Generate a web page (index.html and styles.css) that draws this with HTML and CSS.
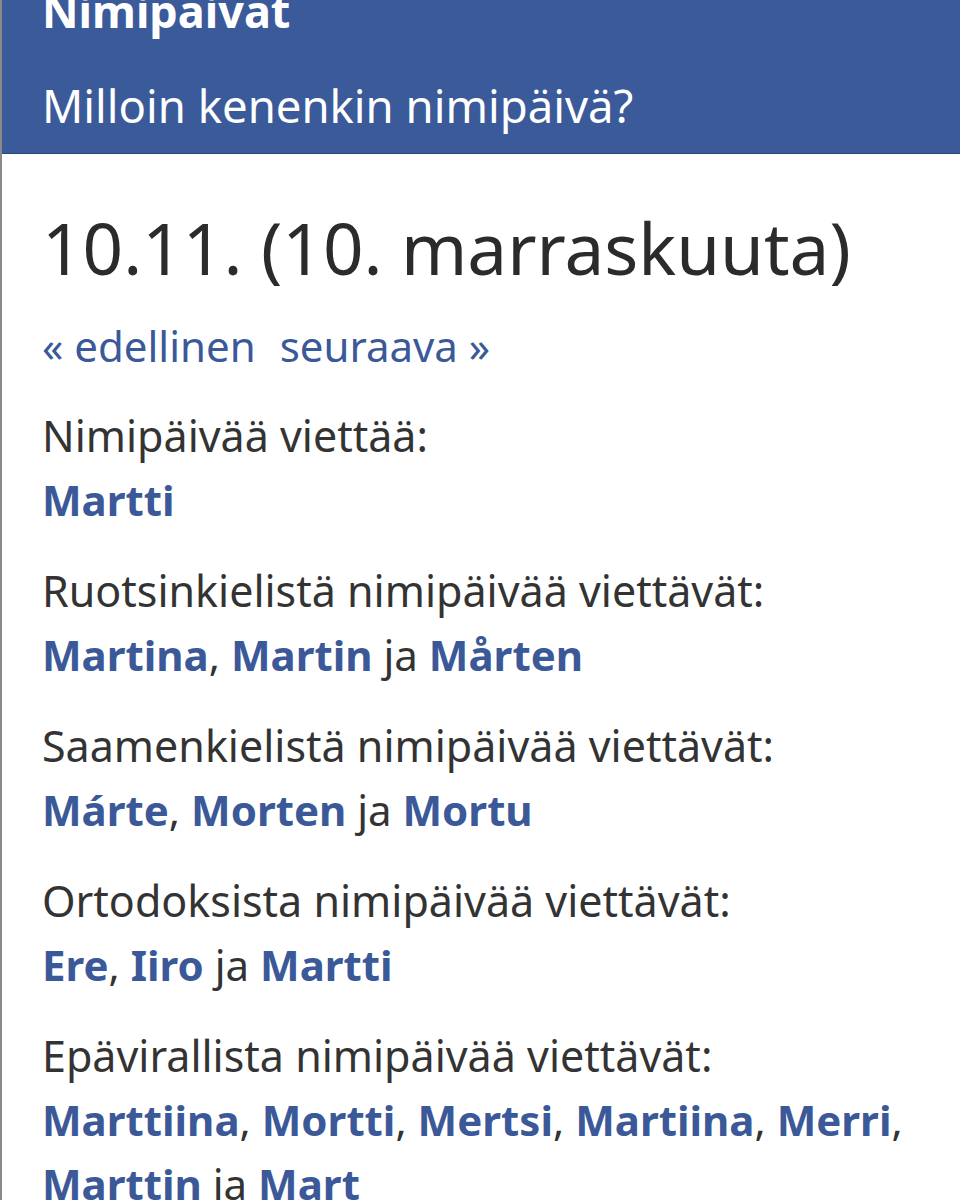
FILE: index.html
```html
<!DOCTYPE html>
<html lang="fi">
<head>
    <meta charset="utf-8">
    <meta name="viewport" content="width=device-width,initial-scale=1.0">
    <title>Nimipäivät 10.11.</title>
    <link rel="stylesheet" href="styles.css">
</head>
<body>
    <div class="page">
        <header class="site-header">
            <h1 class="site-title">Nimipäivät</h1>
            <p class="site-tagline">Milloin kenenkin nimipäivä?</p>
        </header>

        <main class="content">
            <h2 class="day-title">10.11. (10. marraskuuta)</h2>
            <nav class="day-nav">
                <a href="#">« edellinen</a>
                <a href="#">seuraava »</a>
            </nav>

            <div class="group">
                <p class="group-label">Nimipäivää viettää:</p>
                <p class="names"><a href="#">Martti</a></p>
            </div>

            <div class="group">
                <p class="group-label">Ruotsinkielistä nimipäivää viettävät:</p>
                <p class="names"><a href="#">Martina</a>, <a href="#">Martin</a> ja <a href="#">Mårten</a></p>
            </div>

            <div class="group">
                <p class="group-label">Saamenkielistä nimipäivää viettävät:</p>
                <p class="names"><a href="#">Márte</a>, <a href="#">Morten</a> ja <a href="#">Mortu</a></p>
            </div>

            <div class="group">
                <p class="group-label">Ortodoksista nimipäivää viettävät:</p>
                <p class="names"><a href="#">Ere</a>, <a href="#">Iiro</a> ja <a href="#">Martti</a></p>
            </div>

            <div class="group">
                <p class="group-label">Epävirallista nimipäivää viettävät:</p>
                <p class="names"><a href="#">Marttiina</a>, <a href="#">Mortti</a>, <a href="#">Mertsi</a>, <a href="#">Martiina</a>, <a href="#">Merri</a>, <a href="#">Marttin</a> ja <a href="#">Mart</a></p>
            </div>
        </main>
    </div>
</body>
</html>
```

FILE: styles.css
```css
body {margin: 0; background: #fff; color: #333; font-family: "Noto Sans", "Open Sans", sans-serif;}
a {color: #3b5998; text-decoration: none;}
p {margin: 0;}

.page {border-left: 2px solid #8a8a8a; min-height: 1200px; overflow: hidden;}

.site-header {display: flow-root; background: #3b5a9a; color: #fff; padding: 0 40px; border-bottom: 1px solid #2e4677; height: 154px; box-sizing: border-box;}
.site-title {margin: -17px 0 0; font-size: 45px; line-height: 56px; font-weight: bold;}
.site-tagline {margin-top: 40px; font-size: 45.5px; line-height: 52px;}

.content {padding: 0 30px 0 40px;}
.day-title {margin: 52px 0 0; font-size: 71px; line-height: 84px; font-weight: normal; color: #2b2b2b;}
.day-nav {margin-top: 31px; font-size: 42px; line-height: 50px; display: flex; gap: 24px;}

.group {margin-top: 27px; font-size: 42px; line-height: 64px;}
.group:first-of-type {margin-top: 33px;}
.group-label {font-size: 43px;}
.names a {font-weight: bold;}
```
